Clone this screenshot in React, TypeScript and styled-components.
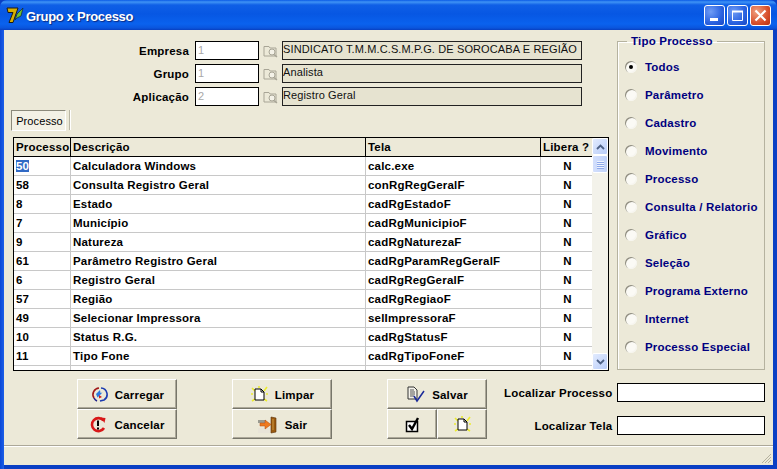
import styled, { createGlobalStyle } from "styled-components";

const GlobalStyle = createGlobalStyle`
  html, body {
    margin: 0;
    padding: 0;
    background: #0a3fc4;
  }
  body {
    font-family: "Liberation Sans", Arial, sans-serif;
    font-size: 11px;
  }
`;

const Window = styled.div`
  width: 777px;
  height: 469px;
  display: flex;
  flex-direction: column;
  overflow: hidden;
  border-radius: 7px 7px 0 0;
  background: linear-gradient(90deg, #0a47d6 0, #1c5fe8 4px, #0a3fc4 4px);
`;

const TitleBar = styled.div`
  height: 30px;
  flex: none;
  display: flex;
  align-items: center;
  box-sizing: border-box;
  padding: 0 6px 0 6px;
  background: linear-gradient(
    180deg,
    #0a5ae6 0,
    #3f93f5 2px,
    #0f5fe6 5px,
    #0757e3 14px,
    #0a62ee 24px,
    #0a55dd 28px,
    #083fc0 30px
  );
`;

const TitleText = styled.span`
  margin: 2px 0 0 2px;
  color: #fff;
  font-size: 13px;
  font-weight: bold;
  letter-spacing: -0.3px;
  text-shadow: 1px 1px 1px #0a2a80;
  flex: 1;
`;

const WinButton = styled.div<{ $close?: boolean }>`
  width: 21px;
  height: 21px;
  margin-left: 2px;
  box-sizing: border-box;
  border: 1px solid #fff;
  border-radius: 3px;
  display: flex;
  align-items: center;
  justify-content: center;
  background: ${(p) =>
    p.$close
      ? "radial-gradient(circle at 30% 30%, #f0a080, #d8502c 60%, #b83010)"
      : "radial-gradient(circle at 30% 30%, #6f9cf5, #2a62e0 60%, #1a48c4)"};
`;

const Client = styled.div`
  flex: 1;
  margin: 0 4px 4px;
  min-height: 0;
  display: flex;
  flex-direction: column;
  background: #ece9d8;
  color: #000;
`;

const Body = styled.div`
  display: flex;
  height: 341px;
  flex: none;
`;

const LeftPane = styled.div`
  width: 613px;
  flex: none;
  display: flex;
  flex-direction: column;
`;

const Form = styled.div`
  display: flex;
  flex-direction: column;
  gap: 4px;
  margin-top: 11px;
`;

const FormRow = styled.div`
  display: flex;
  align-items: center;
  height: 19px;
`;

const BoldLabel = styled.label`
  font-weight: bold;
  font-size: 11.5px;
  letter-spacing: 0.2px;
  text-align: right;
`;

const FormLabel = styled(BoldLabel)`
  width: 185px;
  margin-right: 6px;
  padding-top: 1px;
`;

const CodeInput = styled.div`
  width: 64px;
  height: 19px;
  box-sizing: border-box;
  border: 1px solid #000;
  background: #fff;
  color: #a8a8a8;
  padding-left: 2px;
  line-height: 16px;
  font-size: 11px;
`;

const LookupIcon = styled.svg`
  width: 16px;
  height: 16px;
  margin: 1px 3px 0 4px;
`;

const NameField = styled.div`
  width: 300px;
  height: 19px;
  box-sizing: border-box;
  border: 1px solid #222;
  background: #e6e3d0;
  padding-left: 0;
  line-height: 14px;
  font-size: 11px;
  letter-spacing: 0.12px;
  white-space: nowrap;
  overflow: hidden;
  color: #111;
`;

const TabStrip = styled.div`
  display: flex;
  margin: 4px 0 0 7px;
  height: 27px;
`;

const Tab = styled.div`
  width: 55px;
  height: 21px;
  box-sizing: border-box;
  padding-left: 2px;
  border: 1px solid;
  border-color: #8c8a7c #fff #fff #8c8a7c;
  background: #f3f1e6;
  text-align: center;
  line-height: 20px;
  font-size: 11px;
  letter-spacing: 0.1px;
`;

const TabDivider = styled.div`
  width: 2px;
  height: 20px;
  margin-left: 3px;
  background: linear-gradient(90deg, #b8b5a4 50%, #fff 50%);
`;

const GridFrame = styled.div`
  width: 596px;
  height: 234px;
  margin-left: 9px;
  box-sizing: border-box;
  border: 1px solid #000;
  display: flex;
  background: #fff;
  overflow: hidden;
`;

const GridScroll = styled.div`
  width: 578px;
  overflow: hidden;
`;

const DataTable = styled.table`
  border-collapse: separate;
  border-spacing: 0;
  table-layout: fixed;
  width: 578px;
`;

const HeadCell = styled.th`
  height: 19px;
  padding: 0 0 0 2px;
  box-sizing: border-box;
  background: #ece9d8;
  border-right: 1px solid #000;
  border-bottom: 1px solid #000;
  text-align: left;
  font-size: 11.5px;
  letter-spacing: 0.2px;
  white-space: nowrap;
  overflow: hidden;

  &:last-child {
    border-right: none;
  }
`;

const DataCell = styled.td<{ $center?: boolean }>`
  height: 19px;
  padding: 0 0 0 2px;
  box-sizing: border-box;
  border-right: 1px solid #c8c8c8;
  border-bottom: 1px solid #c8c8c8;
  font-size: 11.5px;
  font-weight: bold;
  letter-spacing: 0.2px;
  white-space: nowrap;
  overflow: hidden;
  text-align: ${(p) => (p.$center ? "center" : "left")};

  &:last-child {
    border-right: none;
  }
`;

const Selected = styled.span`
  background: #316ac5;
  color: #fff;
`;

const ScrollBar = styled.div`
  width: 16px;
  flex: none;
  margin-left: 0;
  display: flex;
  flex-direction: column;
  background: #f3f2ea;
`;

const ScrollButton = styled.div`
  height: 17px;
  flex: none;
  box-sizing: border-box;
  border: 1px solid #fff;
  border-radius: 2px;
  background: linear-gradient(135deg, #e2ebfe, #b9cdf9);
  display: flex;
  align-items: center;
  justify-content: center;
`;

const ScrollThumb = styled.div`
  height: 18px;
  flex: none;
  box-sizing: border-box;
  border: 1px solid #fff;
  border-radius: 2px;
  background: linear-gradient(90deg, #d3dffc, #c0d2fa);
  display: flex;
  flex-direction: column;
  align-items: center;
  justify-content: center;
  gap: 1px;
`;

const Grip = styled.i`
  display: block;
  width: 7px;
  height: 1px;
  background: #eef3fe;
  box-shadow: 0 1px 0 #8faaeb;
`;

const ScrollTrack = styled.div`
  flex: 1;
`;

const GroupBox = styled.fieldset`
  width: 148px;
  height: 335px;
  margin: 5px 0 0 0;
  padding: 0 0 0 8px;
  box-sizing: border-box;
  border: 1px solid #b5b29f;
  box-shadow: inset 1px 1px 0 #fff;
  min-inline-size: 0;
`;

const GroupLegend = styled.legend`
  margin-left: 1px;
  padding: 0 4px;
  color: #000080;
  font-weight: bold;
  font-size: 11.5px;
  letter-spacing: 0.2px;
`;

const RadioList = styled.div`
  display: flex;
  flex-direction: column;
  margin-top: 6px;
`;

const RadioRow = styled.div`
  height: 28px;
  display: flex;
  align-items: center;
  gap: 8px;
  color: #000080;
  font-weight: bold;
  font-size: 11.5px;
  letter-spacing: 0.2px;
  white-space: nowrap;
`;

const RadioDot = styled.span<{ $checked?: boolean }>`
  width: 12px;
  height: 12px;
  flex: none;
  margin-left: -1px;
  border-radius: 50%;
  display: flex;
  align-items: center;
  justify-content: center;
  background: #fbfaf5;
  box-shadow: inset 1px 1px 0 #8e8c7e, inset -1px -1px 0 #f6f5ee;

  &::after {
    content: "";
    display: ${(p) => (p.$checked ? "block" : "none")};
    width: 4px;
    height: 4px;
    border-radius: 50%;
    background: #000;
  }
`;

const Footer = styled.div`
  display: flex;
  height: 74px;
  flex: none;
  box-sizing: border-box;
  padding: 8px 0 0 73px;
`;

const ButtonStack = styled.div`
  width: 100px;
  margin-right: 55px;
  display: flex;
  flex-direction: column;
  flex: none;
`;

const SplitRow = styled.div`
  display: flex;
`;

const ToolButton = styled.div<{ $half?: boolean }>`
  height: 30px;
  width: ${(p) => (p.$half ? "50px" : "100px")};
  flex: none;
  box-sizing: border-box;
  padding: 1px 0 0 1px;
  border: 1px solid;
  border-color: #fff #77766a #77766a #fff;
  box-shadow: inset -1px -1px 0 #aca899;
  background: #ece9d8;
  display: flex;
  align-items: center;
  justify-content: center;
  gap: 7px;
  font-weight: bold;
  font-size: 11.5px;
  letter-spacing: 0.2px;
`;

const SearchPane = styled.div`
  display: flex;
  flex-direction: column;
  gap: 14px;
  margin: 4px 0 0 -38px;
  align-items: flex-end;
`;

const SearchRow = styled.div`
  display: flex;
  align-items: center;
  gap: 5px;
`;

const SearchInput = styled.div`
  width: 148px;
  height: 19px;
  box-sizing: border-box;
  border: 1px solid #000;
  background: #fff;
`;

const StatusBar = styled.div`
  flex: 1;
  border-top: 1px solid #aca899;
  box-shadow: inset 0 1px 0 #fff;
  position: relative;
`;

const ResizeGrip = styled.svg`
  position: absolute;
  right: 1px;
  bottom: 1px;
  width: 12px;
  height: 12px;
`;

const rows = [
  ["50", "Calculadora Windows", "calc.exe", "N"],
  ["58", "Consulta Registro Geral", "conRgRegGeralF", "N"],
  ["8", "Estado", "cadRgEstadoF", "N"],
  ["7", "Município", "cadRgMunicipioF", "N"],
  ["9", "Natureza", "cadRgNaturezaF", "N"],
  ["61", "Parâmetro Registro Geral", "cadRgParamRegGeralF", "N"],
  ["6", "Registro Geral", "cadRgRegGeralF", "N"],
  ["57", "Região", "cadRgRegiaoF", "N"],
  ["49", "Selecionar Impressora", "selImpressoraF", "N"],
  ["10", "Status R.G.", "cadRgStatusF", "N"],
  ["11", "Tipo Fone", "cadRgTipoFoneF", "N"],
];

const tipos = [
  "Todos",
  "Parâmetro",
  "Cadastro",
  "Movimento",
  "Processo",
  "Consulta / Relatorio",
  "Gráfico",
  "Seleção",
  "Programa Externo",
  "Internet",
  "Processo Especial",
];

const fields = [
  ["Empresa", "1", "SINDICATO T.M.M.C.S.M.P.G. DE SOROCABA E REGIÃO"],
  ["Grupo", "1", "Analista"],
  ["Aplicação", "2", "Registro Geral"],
];

function AppLogo() {
  return (
    <svg width="18" height="18" viewBox="0 0 18 18">
      <path d="M1 2h11L7 16.500H3l4-10H2z" fill="#d8b000" stroke="#1a1a1a" strokeWidth="1" />
      <path d="M9 14l2-6 6-6-2 8-4 2z" fill="#6fc030" stroke="#123" strokeWidth="0.7" />
    </svg>
  );
}

function FolderLens() {
  return (
    <LookupIcon viewBox="0 0 16 16">
      <path d="M1 3.500h5l1 1.500h6v8H1z" fill="#ece9d8" stroke="#a8a596" />
      <circle cx="9" cy="9" r="3" fill="#f4f2e8" stroke="#a8a596" />
      <path d="M11 11.500l3 2.500" stroke="#a8a596" strokeWidth="1.4" />
    </LookupIcon>
  );
}

function ReloadIcon() {
  return (
    <svg width="17" height="17" viewBox="0 0 17 17" fill="none">
      <path d="M3 12A6.500 6.500 0 0 1 8 2" stroke="#a01818" strokeWidth="1.6" />
      <path d="M6 15a6.500 6.500 0 0 1-3-3" stroke="#20208a" strokeWidth="1.6" />
      <path d="M10 2a6.500 6.500 0 0 1 3 12l-4 1" stroke="#1a3ab0" strokeWidth="1.6" />
      <path d="M5 8l4-4 .5 3 2-.5-5 5z" fill="#2a7ae0" />
      <path d="M11 11l-3 1.500V9z" fill="#d02020" />
    </svg>
  );
}

function CancelIcon() {
  return (
    <svg width="17" height="17" viewBox="0 0 17 17" fill="none">
      <path d="M13.500 4.500A6.500 6.500 0 1 0 14 12" stroke="#d81818" strokeWidth="2.6" />
      <path d="M10.500 1.500l5 .5-1 5z" fill="#d81818" />
      <path d="M8 4.500v5.500" stroke="#000" strokeWidth="2" />
      <path d="M8 11.500v2" stroke="#000" strokeWidth="2" />
    </svg>
  );
}

function NewPageIcon() {
  return (
    <svg width="17" height="17" viewBox="0 0 17 17" fill="none">
      <path d="M1 2l3 3M16 1l-3 4M1 15l3-2M16 15l-3-2M0 8h2M15 8h2M8 0v2" stroke="#ecec30" strokeWidth="1.6" />
      <path d="M4 3h6l3 3v8H4z" fill="#fff" stroke="#000" />
      <path d="M10 3v3h3" stroke="#000" />
    </svg>
  );
}

function ExitIcon() {
  return (
    <svg width="20" height="18" viewBox="0 0 20 18" fill="none">
      <path d="M0 12h13v5H0z" fill="#e8e4d8" />
      <path d="M0 4h8v3H0z" fill="#9a9a90" />
      <path d="M13 1l5 1v14l-5 1z" fill="#9a5a10" stroke="#5a3008" strokeWidth="0.6" />
      <path d="M15 3v11" stroke="#d09a40" />
      <path d="M2 7h5V4l6 4.500-6 4.500V10H2z" fill="#ee7a20" stroke="#b04a10" strokeWidth="0.5" />
    </svg>
  );
}

function SaveIcon() {
  return (
    <svg width="18" height="17" viewBox="0 0 18 17" fill="none">
      <path d="M1 1h6l3 3v9H1z" fill="#f4f2ea" stroke="#333" />
      <path d="M3 4h4M3 6h5M3 8h5M3 10h4" stroke="#555" />
      <path d="M7 10l3 5 7-10" stroke="#1a2a9a" strokeWidth="1.5" />
    </svg>
  );
}

function CheckIcon() {
  return (
    <svg width="16" height="16" viewBox="0 0 16 16" fill="none">
      <path d="M1.500 4.500h11v10h-11z" fill="#fff" stroke="#000" strokeWidth="1.5" />
      <path d="M4 8l3 4 6-11" stroke="#000" strokeWidth="2.4" />
    </svg>
  );
}

function App() {
  return (
    <>
      <GlobalStyle />
      <Window>
        <TitleBar>
          <AppLogo />
          <TitleText>Grupo x Processo</TitleText>
          <WinButton>
            <svg width="13" height="13" viewBox="0 0 13 13">
              <path d="M2 9h8v3H2z" fill="#fff" />
            </svg>
          </WinButton>
          <WinButton>
            <svg width="13" height="13" viewBox="0 0 13 13" fill="none">
              <path d="M1.500 2.500h10v9h-10z" stroke="#fff" />
              <path d="M1 2.500h11" stroke="#fff" strokeWidth="2" />
            </svg>
          </WinButton>
          <WinButton $close>
            <svg width="13" height="13" viewBox="0 0 13 13">
              <path d="M1.500 1.500l10 10M11.500 1.500l-10 10" stroke="#fff" strokeWidth="2.2" />
            </svg>
          </WinButton>
        </TitleBar>
        <Client>
          <Body>
            <LeftPane>
              <Form>
                {fields.map(([label, code, name]) => (
                  <FormRow key={label}>
                    <FormLabel>{label}</FormLabel>
                    <CodeInput>{code}</CodeInput>
                    <FolderLens />
                    <NameField>{name}</NameField>
                  </FormRow>
                ))}
              </Form>
              <TabStrip>
                <Tab>Processo</Tab>
                <TabDivider />
              </TabStrip>
              <GridFrame>
                <GridScroll>
                  <DataTable>
                    <colgroup>
                      <col width="57" />
                      <col width="295" />
                      <col width="175" />
                      <col width="51" />
                    </colgroup>
                    <thead>
                      <tr>
                        <HeadCell>Processo</HeadCell>
                        <HeadCell>Descrição</HeadCell>
                        <HeadCell>Tela</HeadCell>
                        <HeadCell>Libera ?</HeadCell>
                      </tr>
                    </thead>
                    <tbody>
                      {rows.map((r, i) => (
                        <tr key={r[0]}>
                          <DataCell>{i === 0 ? <Selected>{r[0]}</Selected> : r[0]}</DataCell>
                          <DataCell>{r[1]}</DataCell>
                          <DataCell>{r[2]}</DataCell>
                          <DataCell $center>{r[3]}</DataCell>
                        </tr>
                      ))}
                      <tr>
                        <DataCell />
                        <DataCell />
                        <DataCell />
                        <DataCell />
                      </tr>
                    </tbody>
                  </DataTable>
                </GridScroll>
                <ScrollBar>
                  <ScrollButton>
                    <svg width="9" height="6" viewBox="0 0 9 6" fill="none">
                      <path d="M1 5l3.500-3.500L8 5" stroke="#4d6185" strokeWidth="1.8" />
                    </svg>
                  </ScrollButton>
                  <ScrollThumb>
                    <Grip />
                    <Grip />
                    <Grip />
                    <Grip />
                  </ScrollThumb>
                  <ScrollTrack />
                  <ScrollButton>
                    <svg width="9" height="6" viewBox="0 0 9 6" fill="none">
                      <path d="M1 1l3.500 3.500L8 1" stroke="#4d6185" strokeWidth="1.8" />
                    </svg>
                  </ScrollButton>
                </ScrollBar>
              </GridFrame>
            </LeftPane>
            <GroupBox>
              <GroupLegend>Tipo Processo</GroupLegend>
              <RadioList>
                {tipos.map((t, i) => (
                  <RadioRow key={t}>
                    <RadioDot $checked={i === 0} />
                    {t}
                  </RadioRow>
                ))}
              </RadioList>
            </GroupBox>
          </Body>
          <Footer>
            <ButtonStack>
              <ToolButton>
                <ReloadIcon />
                Carregar
              </ToolButton>
              <ToolButton>
                <CancelIcon />
                Cancelar
              </ToolButton>
            </ButtonStack>
            <ButtonStack>
              <ToolButton>
                <NewPageIcon />
                Limpar
              </ToolButton>
              <ToolButton>
                <ExitIcon />
                Sair
              </ToolButton>
            </ButtonStack>
            <ButtonStack>
              <ToolButton>
                <SaveIcon />
                Salvar
              </ToolButton>
              <SplitRow>
                <ToolButton $half>
                  <CheckIcon />
                </ToolButton>
                <ToolButton $half>
                  <NewPageIcon />
                </ToolButton>
              </SplitRow>
            </ButtonStack>
            <SearchPane>
              <SearchRow>
                <BoldLabel>Localizar Processo</BoldLabel>
                <SearchInput />
              </SearchRow>
              <SearchRow>
                <BoldLabel>Localizar Tela</BoldLabel>
                <SearchInput />
              </SearchRow>
            </SearchPane>
          </Footer>
          <StatusBar>
            <ResizeGrip viewBox="0 0 12 12">
              <path d="M11 2L2 11M11 5l-6 6M11 8l-3 3" stroke="#b5b29f" strokeWidth="1" />
            </ResizeGrip>
          </StatusBar>
        </Client>
      </Window>
    </>
  );
}

export default App;
